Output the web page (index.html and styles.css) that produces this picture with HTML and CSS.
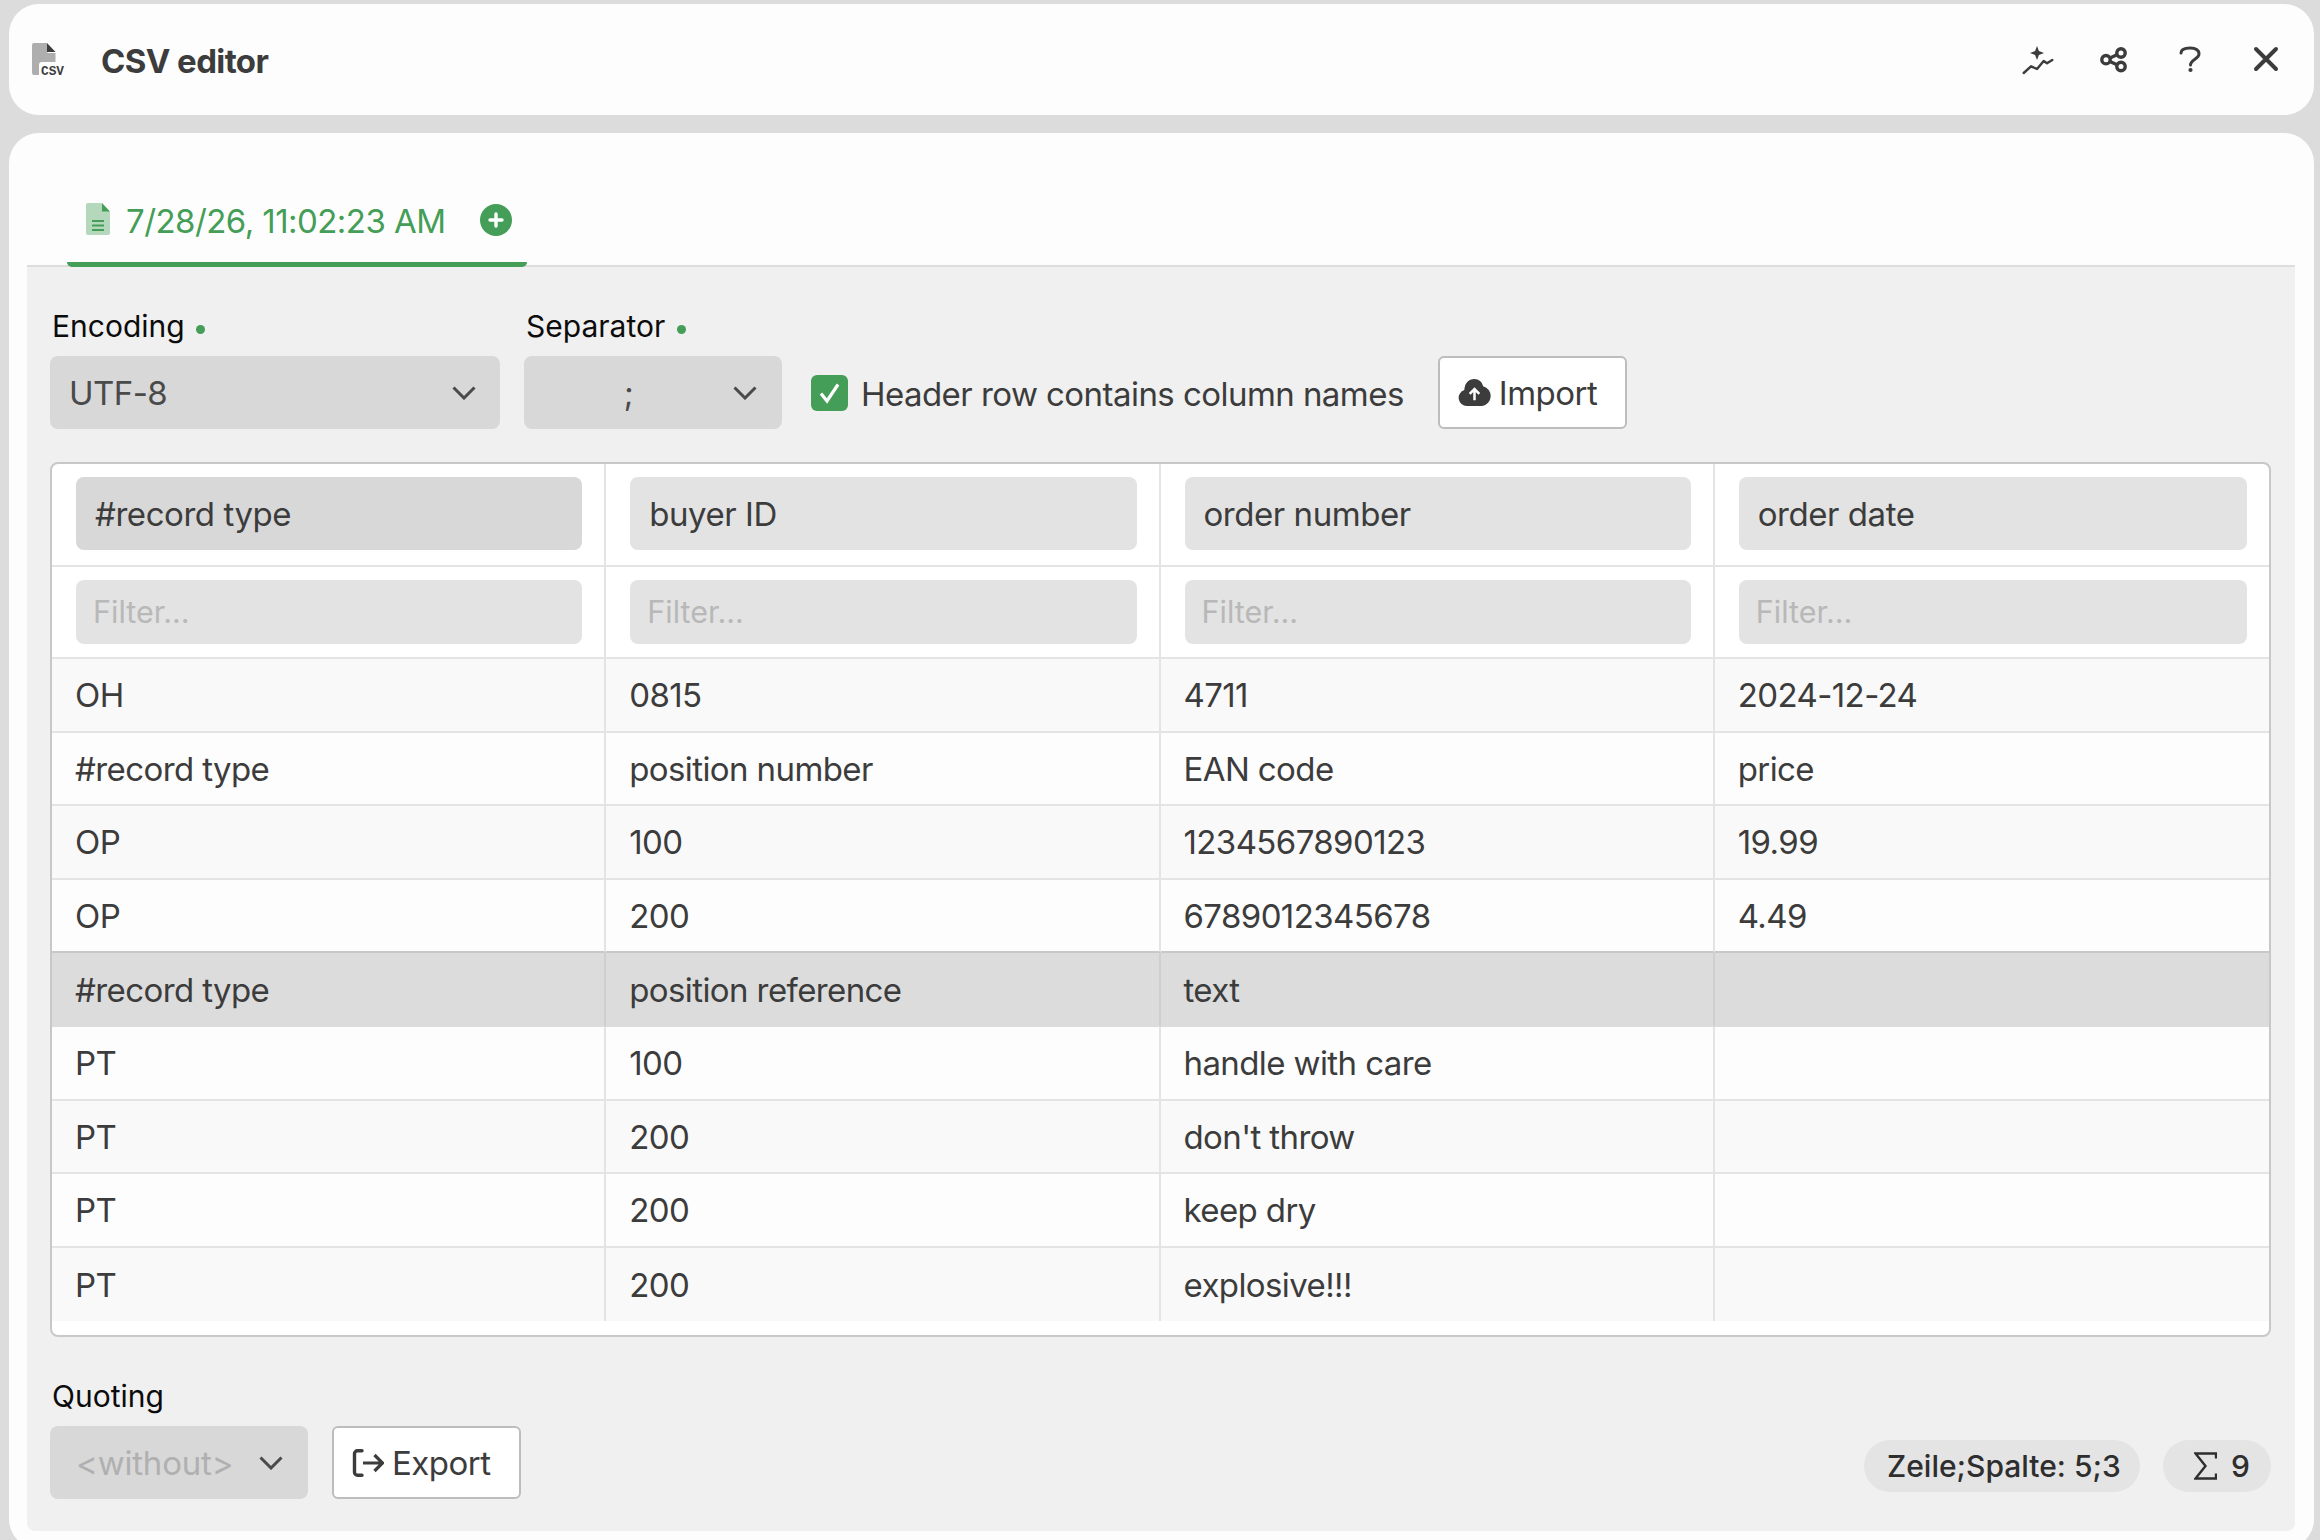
FILE: index.html
```html
<!DOCTYPE html>
<html lang="en">
<head>
<meta charset="utf-8">
<title>CSV editor</title>
<link rel="stylesheet" href="styles.css">
</head>
<body>
<header class="titlebar">
  <div class="title-left">
    <svg class="app-icon" viewBox="0 0 32 32"><path d="M2 0H15V8.500a1.500 1.500 0 0 0 1.500 1.500H23.500V19H10a3 3 0 0 0-3 3V32H2a2 2 0 0 1-2-2V2a2 2 0 0 1 2-2Z" fill="#aeaeae"/><path d="M15 0L23.500 9H15Z" fill="#3c3c3c"/><text class="app-icon-text" x="9" y="31.500">CSV</text></svg>
    <h1 class="title">CSV editor</h1>
  </div>
  <div class="title-actions">
    <svg class="tool" viewBox="0 0 32 32"><path d="M15 2l1.900 5.100L22 9l-5.100 1.900L15 16l-1.900-5.100L8 9l5.100-1.900Z" fill="#3c3c3c"/><path d="M1.700 29L9 22.300l6 2.700 6.700-8 3.300 2.300 5.300-3.300" fill="none" stroke="#3c3c3c" stroke-width="2.400" stroke-linecap="round" stroke-linejoin="round"/></svg>
    <svg class="tool" viewBox="0 0 32 32"><g fill="none" stroke="#3c3c3c" stroke-width="3.400"><circle cx="23" cy="9" r="4.200"/><circle cx="23" cy="22.500" r="4.200"/><circle cx="8" cy="15.700" r="4.200"/><path d="M12 14L19 10.800M12 17.500L19 20.700"/></g></svg>
    <svg class="tool" viewBox="0 0 32 32"><path d="M7 9C7 5 11 4 16 4s9 1.500 9 6c0 5-8.500 5.500-8.500 11" fill="none" stroke="#3c3c3c" stroke-width="3" stroke-linecap="round"/><circle cx="16.500" cy="26" r="2.100" fill="#3c3c3c"/></svg>
    <svg class="tool" viewBox="0 0 32 32"><path d="M6 5L26 25M26 5L6 25" fill="none" stroke="#3c3c3c" stroke-width="4" stroke-linecap="round"/></svg>
  </div>
</header>

<main class="card">
  <nav class="tabs">
    <div class="tab">
      <svg class="tab-file" viewBox="0 0 24 32"><path d="M2 0H15.500L24 9V30a2 2 0 0 1-2 2H2a2 2 0 0 1-2-2V2a2 2 0 0 1 2-2Z" fill="#b5d8bd"/><path d="M16 0L24 8.500H16Z" fill="#449e57"/><path d="M6 18H18M6 22.500H18M6 27H18" stroke="#449e57" stroke-width="2"/></svg>
      <span class="tab-label">7/28/26, 11:02:23 AM</span>
      <svg class="tab-add" viewBox="0 0 32 32"><circle cx="16" cy="16" r="16" fill="#449e57"/><path d="M16 10V22M10 16H22" stroke="#fff" stroke-width="3.400" stroke-linecap="round"/></svg>
    </div>
  </nav>

  <section class="panel">
    <div class="toolbar">
      <div class="field">
        <div class="label">Encoding <span class="dot"></span></div>
        <div class="select select-encoding"><span>UTF-8</span><svg class="chev" viewBox="0 0 24 14"><path d="M1.500 1.500L12 12L22.500 1.500" fill="none" stroke="#4a4a4a" stroke-width="3"/></svg></div>
      </div>
      <div class="field">
        <div class="label">Separator <span class="dot"></span></div>
        <div class="select select-sep"><span class="sep-val">;</span><svg class="chev" viewBox="0 0 24 14"><path d="M1.500 1.500L12 12L22.500 1.500" fill="none" stroke="#4a4a4a" stroke-width="3"/></svg></div>
      </div>
      <label class="check">
        <svg class="checkbox" viewBox="0 0 37 36"><rect width="37" height="36" rx="6" fill="#449e57"/><path d="M10 18.500L16 26L27 9.500" fill="none" stroke="#fff" stroke-width="3.200"/></svg>
        <span class="check-text">Header row contains column names</span>
      </label>
      <button class="btn btn-import"><svg class="btn-icon" viewBox="0 0 34 28"><path d="M9 28a8.500 8.500 0 0 1-2.500-16.600A10.500 10.500 0 0 1 17 0a9.500 9.500 0 0 1 9 7.500A10.500 10.500 0 0 1 25 28Z" fill="#3c3c3c"/><path d="M17 22V11M12 15.500L17 10.500L22 15.500" fill="none" stroke="#fff" stroke-width="2.600"/></svg>Import</button>
    </div>

    <div class="table-box">
      <table class="grid">
        <thead>
          <tr class="head-row">
            <th><div class="col-head col-head-active">#record type</div></th>
            <th><div class="col-head">buyer ID</div></th>
            <th><div class="col-head">order number</div></th>
            <th><div class="col-head">order date</div></th>
          </tr>
          <tr class="filter-row">
            <th><div class="filter">Filter...</div></th>
            <th><div class="filter">Filter...</div></th>
            <th><div class="filter">Filter...</div></th>
            <th><div class="filter">Filter...</div></th>
          </tr>
        </thead>
        <tbody>
          <tr class="alt"><td>OH</td><td>0815</td><td>4711</td><td>2024-12-24</td></tr>
          <tr><td>#record type</td><td>position number</td><td>EAN code</td><td>price</td></tr>
          <tr class="alt"><td>OP</td><td>100</td><td>1234567890123</td><td>19.99</td></tr>
          <tr class="before-active"><td>OP</td><td>200</td><td>6789012345678</td><td>4.49</td></tr>
          <tr class="active"><td>#record type</td><td>position reference</td><td>text</td><td></td></tr>
          <tr><td>PT</td><td>100</td><td>handle with care</td><td></td></tr>
          <tr class="alt"><td>PT</td><td>200</td><td>don't throw</td><td></td></tr>
          <tr><td>PT</td><td>200</td><td>keep dry</td><td></td></tr>
          <tr class="alt last"><td>PT</td><td>200</td><td>explosive!!!</td><td></td></tr>
        </tbody>
      </table>
    </div>

    <div class="footer">
      <div class="footer-left">
        <div class="field">
          <div class="label">Quoting</div>
          <div class="select select-quote"><span>&lt;without&gt;</span><svg class="chev" viewBox="0 0 24 14"><path d="M1.500 1.500L12 12L22.500 1.500" fill="none" stroke="#4a4a4a" stroke-width="3"/></svg></div>
        </div>
        <button class="btn btn-export"><svg class="btn-icon-export" viewBox="0 0 32 28"><path d="M10 1.700H5.500A3 3 0 0 0 2.500 4.700V23.300A3 3 0 0 0 5.500 26.300H10" fill="none" stroke="#3c3c3c" stroke-width="3.400" stroke-linecap="round"/><path d="M11 14H30M22.500 6L30.500 14L22.500 22" fill="none" stroke="#3c3c3c" stroke-width="3.200"/></svg>Export</button>
      </div>
      <div class="chips">
        <div class="chip chip-pos">Zeile;Spalte: 5;3</div>
        <div class="chip chip-sum"><svg class="sum-icon" viewBox="0 0 23 28"><path d="M22 6.500V1.500H1.500L11.500 14L1.500 26.500H22V21.500" fill="none" stroke="#2e2e2e" stroke-width="2.400"/></svg>9</div>
      </div>
    </div>
  </section>
</main>
</body>
</html>
```
FILE: styles.css
```css
* { box-sizing: border-box; }

html, body { margin: 0; height: 1540px; overflow: hidden; }

body {
  background: #dcdcdc;
  padding: 4px 6px 0 9px;
  font-family: Inter, "Noto Sans", sans-serif;
  font-size: 33px;
  color: #3c3c3c;
}

.titlebar {
  height: 111px;
  background: #fdfdfd;
  border-radius: 30px;
  display: flex;
  align-items: center;
  justify-content: space-between;
  padding: 0 32px 0 23px;
  margin-bottom: 18px;
}

.title-left { display: flex; align-items: center; gap: 37px; }
.app-icon { width: 32px; height: 32px; display: block; margin-top: -1px; overflow: visible; }
.app-icon-text { font-family: "Liberation Mono", monospace; font-size: 12.800px; font-weight: 700; fill: #3c3c3c; }
.title { margin: 2px 0 0; font-size: 33px; font-weight: 700; letter-spacing: -0.6px; color: #3c3c3c; line-height: 40px; }

.title-actions { display: flex; align-items: center; gap: 44px; }
.tool { width: 32px; height: 32px; display: block; }

.card {
  height: 1416px;
  background: #fdfdfd;
  border-radius: 30px;
  padding: 0 19px 18px 18px;
  display: flex;
  flex-direction: column;
}

.tabs {
  height: 134px;
  flex: none;
  border-bottom: 2px solid #dddddd;
  padding-left: 40px;
  display: flex;
  align-items: flex-end;
}

.tab {
  width: 460px;
  height: 87px;
  margin-bottom: -2px;
  border-bottom: 5px solid #449e57;
  border-radius: 0 0 5px 5px / 0 0 5px 5px;
  display: flex;
  align-items: flex-start;
  padding: 21px 0 0 19px;
  color: #449e57;
}

.tab-file { width: 24px; height: 32px; flex: none; margin-top: 2px; }
.tab-label { margin-left: 16px; font-size: 33px; letter-spacing: -0.55px; line-height: 40px; white-space: nowrap; }
.tab-add { width: 32px; height: 32px; flex: none; margin-left: 35px; margin-top: 3px; }

.panel {
  flex: 1;
  background: #f0f0f0;
  border-radius: 0 0 8px 8px;
  padding: 41px 24px 32px 23px;
  display: flex;
  flex-direction: column;
}

.toolbar { display: flex; align-items: flex-end; height: 121px; }
.field { display: flex; flex-direction: column; margin-right: 24px; }
.label { height: 40px; margin-bottom: 10px; line-height: 40px; font-size: 30px; color: #0c0c0c; padding-left: 2px; white-space: nowrap; }
.dot { display: inline-block; width: 9px; height: 9px; border-radius: 50%; background: #449e57; margin-left: 3px; vertical-align: 3px; }

.select {
  height: 73px;
  background: #d8d8d8;
  border-radius: 8px;
  display: flex;
  align-items: center;
  justify-content: space-between;
  font-size: 33px;
  letter-spacing: -0.55px;
  color: #4a4a4a;
}

.select-encoding { width: 450px; padding: 0 24px 0 19px; }
.select-sep { width: 258px; padding: 0 25px 0 20px; }
.sep-val { flex: 1; text-align: center; padding-right: 20px; }
.select-quote { width: 258px; padding: 0 25px 0 26px; letter-spacing: -0.2px; color: #b0b0b0; }
.chev { width: 24px; height: 14px; display: block; flex: none; }

.check { display: flex; align-items: center; gap: 13px; height: 73px; margin-left: 5px; margin-right: 34px; font-size: 33px; letter-spacing: -0.55px; white-space: nowrap; }
.check-text { padding-top: 2px; }
.checkbox { width: 37px; height: 36px; display: block; flex: none; }

.btn {
  height: 73px;
  border: 2px solid #bdbdbd;
  border-radius: 6px;
  background: #fff;
  color: #3c3c3c;
  display: flex;
  align-items: center;
  font-family: inherit;
  font-size: 33px;
  letter-spacing: -0.5px;
  padding: 0;
}

.btn-import { width: 189px; padding-left: 18px; gap: 8px; }
.btn-icon { width: 33px; height: 27px; display: block; flex: none; }
.btn-export { width: 189px; padding-left: 18px; gap: 8px; }
.btn-icon-export { width: 32px; height: 28px; display: block; flex: none; }

.table-box {
  margin-top: 33px;
  height: 875px;
  flex: none;
  border: 2px solid #c8c8c8;
  border-radius: 8px;
  background: #fff;
  overflow: hidden;
}

.grid { width: 100%; table-layout: fixed; border-collapse: separate; border-spacing: 0; }

.grid th, .grid td {
  border-right: 2px solid #e4e4e4;
  border-bottom: 2px solid #e4e4e4;
  font-weight: 400;
  text-align: left;
  padding: 0;
}

.grid th:last-child, .grid td:last-child { border-right: 0; }

.head-row th { height: 103px; padding: 0 22px 2px 24px; }
.filter-row th { height: 92px; padding: 0 22px 0 24px; }

.col-head {
  height: 73px;
  background: #e3e3e3;
  border-radius: 8px;
  padding-left: 19px;
  line-height: 75px;
  font-size: 33px;
  letter-spacing: -0.45px;
  color: #3c3c3c;
}

.col-head-active { background: #d8d8d8; }

.filter {
  height: 64px;
  background: #e3e3e3;
  border-radius: 8px;
  padding-left: 17px;
  line-height: 64px;
  font-size: 30.500px;
  color: #b8b8b8;
}

.grid td { height: 73.600px; padding: 1px 0 0 23px; font-size: 33px; letter-spacing: -0.6px; color: #3c3c3c; background: #fdfdfd; white-space: nowrap; }
.grid tr.alt td { background: #f9f9f9; }
.grid tr.before-active td { border-bottom-color: #c8c8c8; }
.grid tr.active td { background: #dcdcdc; border-right-color: #cfcfcf; border-bottom-color: #dcdcdc; }
.grid tr.last td { border-bottom: 0; }

.footer { display: flex; align-items: flex-end; justify-content: space-between; margin-top: 39px; }
.footer-left { display: flex; align-items: flex-end; }
.chips { display: flex; gap: 23px; margin-bottom: 7px; }
.chip { height: 52px; border-radius: 26px; background: #e4e4e4; display: flex; align-items: center; font-size: 30px; font-weight: 500; color: #2e2e2e; }
.chip-pos { width: 276px; padding-left: 23px; }
.chip-sum { width: 108px; padding-left: 31px; gap: 14px; }
.sum-icon { width: 23px; height: 28px; display: block; flex: none; }
```
